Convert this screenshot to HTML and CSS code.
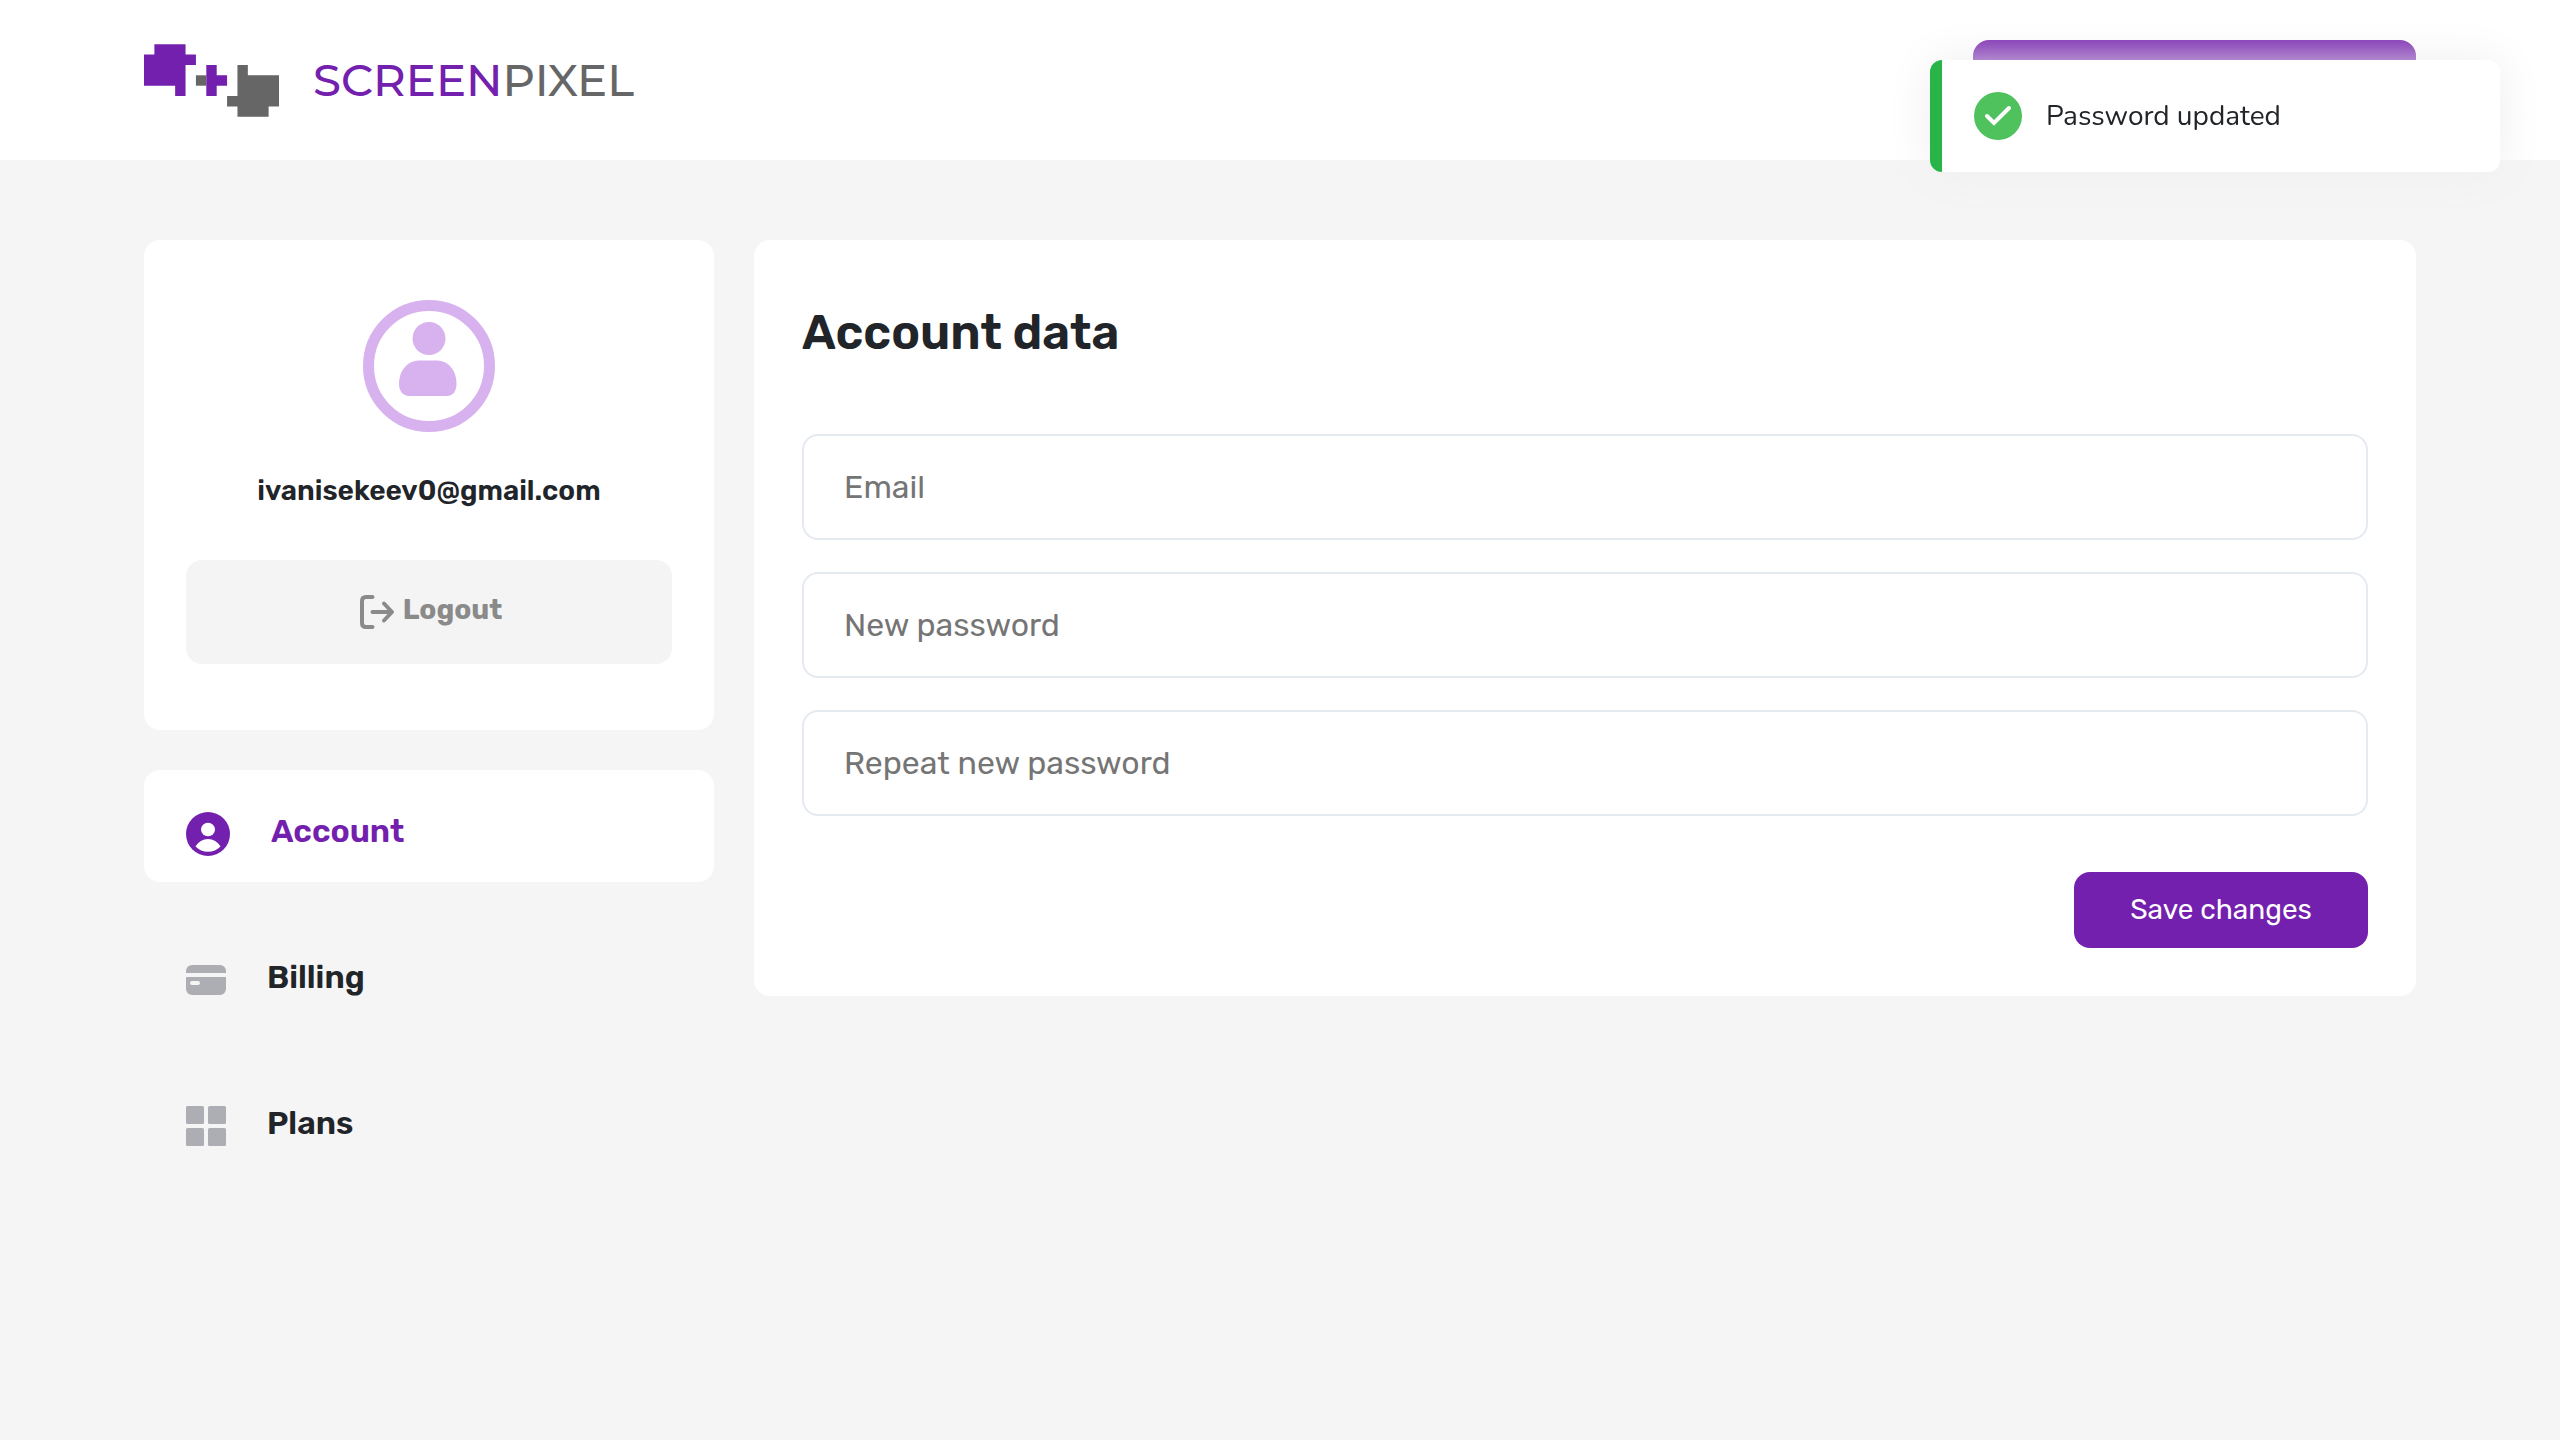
FILE: index.html
```html
<!DOCTYPE html>
<html lang="en">
<head>
  <meta charset="utf-8">
  <meta name="viewport" content="width=device-width, initial-scale=1">
  <title>ScreenPixel – Account</title>
  <link rel="stylesheet" href="styles.css">
</head>
<body>
  <header class="header">
    <a class="logo" href="#">
      <svg class="logo-mark" viewBox="0 0 13 7" aria-hidden="true">
        <path fill="#7420ae" d="M1 0h3v1h1v1H4v3H3V4H0V1h1z"/>
        <path fill="#666" d="M5 3h1v1H5z"/>
        <path fill="#7420ae" d="M6 2h1v1h1v1H7v1H6z"/>
        <path fill="#666" d="M9 2h1v1h3v3h-1v1H9V6H8V5h1z"/>
      </svg>
      <span class="logo-text"><span class="logo-accent">SCREEN</span>PIXEL</span>
    </a>
    <button class="header-action" type="button" aria-label="Menu"></button>
  </header>

  <main class="layout">
    <aside class="sidebar">
      <section class="profile">
        <svg class="avatar" viewBox="0 0 132 132" aria-hidden="true">
          <circle cx="66" cy="66" r="60.5" fill="none" stroke="#d7b2ee" stroke-width="11"/>
          <circle cx="66" cy="38.500" r="16.500" fill="#d7b2ee"/>
          <path fill="#d7b2ee" d="M57 60.500h16C86 60.500 93.500 71 93.500 84c0 7-3.500 12-9.500 12H46c-6 0-10-5-10-12 0-13 8-23.500 21-23.500z"/>
        </svg>
        <p class="profile-email">ivanisekeev0@gmail.com</p>
        <button class="logout" type="button">
          <svg class="logout-icon" viewBox="0 0 35 34" fill="none" stroke="#8a8a8a" stroke-width="4" stroke-linecap="round" stroke-linejoin="round" aria-hidden="true">
            <path d="M12.500 2H6Q2 2 2 6v22q0 4 4 4h6.500M12.500 17H32M24 8.500l8 8.500-8 8.500"/>
          </svg>
          <span class="logout-text">Logout</span>
        </button>
      </section>
      <nav class="nav">
        <a class="nav-item nav-item-active" href="#">
          <svg class="nav-icon nav-icon-account" viewBox="0 0 44 44" aria-hidden="true">
            <circle cx="22" cy="22" r="22" fill="#7420ae"/>
            <ellipse cx="22" cy="17.500" rx="7" ry="6.700" fill="#fff"/>
            <path fill="#fff" d="M9.500 34.500C12 30 17 27 22 27s10 3 12.500 7.500C31 38 27 39.700 22 39.700S13 38 9.500 34.500z"/>
          </svg>
          <span class="nav-text">Account</span>
        </a>
        <a class="nav-item" href="#">
          <svg class="nav-icon" viewBox="0 0 40 40" fill="#adaeb4" aria-hidden="true">
            <path d="M0 13V11a6 6 0 0 1 6-6h28a6 6 0 0 1 6 6v2z"/>
            <path fill-rule="evenodd" d="M0 17h40v12a6 6 0 0 1-6 6H6a6 6 0 0 1-6-6zM6 21a2 2 0 0 0 0 4h6a2 2 0 0 0 0-4z"/>
          </svg>
          <span class="nav-text">Billing</span>
        </a>
        <a class="nav-item" href="#">
          <svg class="nav-icon" viewBox="0 0 40 40" fill="#adaeb4" aria-hidden="true">
            <rect width="18" height="18" rx="1.500"/>
            <rect x="22" width="18" height="18" rx="1.500"/>
            <rect y="22" width="18" height="18" rx="1.500"/>
            <rect x="22" y="22" width="18" height="18" rx="1.500"/>
          </svg>
          <span class="nav-text">Plans</span>
        </a>
      </nav>
    </aside>

    <form class="panel">
      <h1 class="panel-title">Account data</h1>
      <div class="fields">
        <input class="field" type="email" placeholder="Email" aria-label="Email">
        <input class="field" type="password" placeholder="New password" aria-label="New password">
        <input class="field" type="password" placeholder="Repeat new password" aria-label="Repeat new password">
      </div>
      <button class="save" type="button">Save changes</button>
    </form>
  </main>

  <div class="toast" role="status">
    <svg class="toast-icon" viewBox="0 0 48 48" aria-hidden="true">
      <circle cx="24" cy="24" r="24" fill="#4fc15d"/>
      <path d="M13 24l7 7L35 16" fill="none" stroke="#fff" stroke-width="4" stroke-linecap="round"/>
    </svg>
    <span>Password updated</span>
  </div>
</body>
</html>
```
FILE: styles.css
```css
* {
  box-sizing: border-box;
}

body {
  margin: 0;
  background: #f5f5f5;
  color: #212529;
  font-family: Rubik, Inter, "Open Sans", sans-serif;
  font-size: 28px;
}

button,
input {
  font: inherit;
}

a {
  color: inherit;
  text-decoration: none;
}

.header {
  display: flex;
  align-items: center;
  justify-content: space-between;
  height: 160px;
  padding: 0 144px;
  background: #fff;
}

.logo {
  display: flex;
  align-items: center;
  gap: 34px;
}

.logo-mark {
  width: 135px;
  height: 73px;
}

.logo-text {
  color: #666;
  font-family: Montserrat, Inter, sans-serif;
  font-size: 45px;
  font-weight: 500;
  line-height: 56px;
}

.logo-accent {
  color: #7420ae;
}

.header-action {
  width: 443px;
  height: 80px;
  border: 0;
  border-radius: 16px;
  background: #7420ae;
}

.layout {
  display: grid;
  grid-template-columns: 570px 1fr;
  align-items: start;
  gap: 40px;
  padding: 80px 144px;
}

.sidebar {
  display: grid;
  gap: 40px;
}

.profile {
  display: flex;
  flex-direction: column;
  align-items: center;
  padding: 60px 42px 66px;
  border-radius: 16px;
  background: #fff;
}

.avatar {
  width: 132px;
  height: 132px;
}

.profile-email {
  margin: 41px 0 51px;
  font-weight: 600;
  line-height: 36px;
}

.logout {
  display: flex;
  align-items: center;
  justify-content: center;
  gap: 8px;
  width: 100%;
  height: 104px;
  padding: 0 0 0 4px;
  border: 0;
  border-radius: 16px;
  background: #f4f4f4;
  color: #8a8a8a;
  font-weight: 700;
}

.logout-icon {
  width: 35px;
  height: 34px;
}

.logout-text {
  padding-bottom: 6px;
}

.nav {
  display: grid;
  gap: 34px;
}

.nav-item {
  display: flex;
  align-items: center;
  gap: 41px;
  height: 112px;
  padding: 16px 42px 0;
  border-radius: 16px;
  font-size: 32px;
  font-weight: 600;
}

.nav-item-active {
  background: #fff;
  color: #7420ae;
}

.nav-icon {
  width: 40px;
  height: 40px;
}

.nav-icon-account {
  width: 44px;
  height: 44px;
}

.nav-text {
  padding-bottom: 6px;
}

.panel {
  display: flex;
  flex-direction: column;
  padding: 61px 48px 48px;
  border-radius: 16px;
  background: #fff;
}

.panel-title {
  margin: 0 0 69px;
  font-size: 48px;
  font-weight: 600;
  line-height: 64px;
}

.fields {
  display: grid;
  gap: 32px;
}

.field {
  width: 100%;
  height: 106px;
  padding: 0 40px;
  border: 2px solid #e5eaf1;
  border-radius: 16px;
  background: #fff;
  color: #212529;
  font-size: 32px;
}

.field::placeholder {
  color: #757575;
}

.save {
  align-self: flex-end;
  width: 294px;
  height: 76px;
  margin-top: 56px;
  padding: 0 0 2px;
  border: 0;
  border-radius: 16px;
  background: #7420ae;
  color: #fff;
}

.toast {
  position: fixed;
  top: 60px;
  right: 60px;
  display: flex;
  align-items: center;
  gap: 24px;
  width: 570px;
  height: 112px;
  padding: 0 32px;
  border-left: 12px solid #28b446;
  border-radius: 12px;
  background: #fff;
  box-shadow: 0 0 48px #eee;
  font-family: Nunito, "Open Sans", sans-serif;
}

.toast-icon {
  width: 48px;
  height: 48px;
}
```
